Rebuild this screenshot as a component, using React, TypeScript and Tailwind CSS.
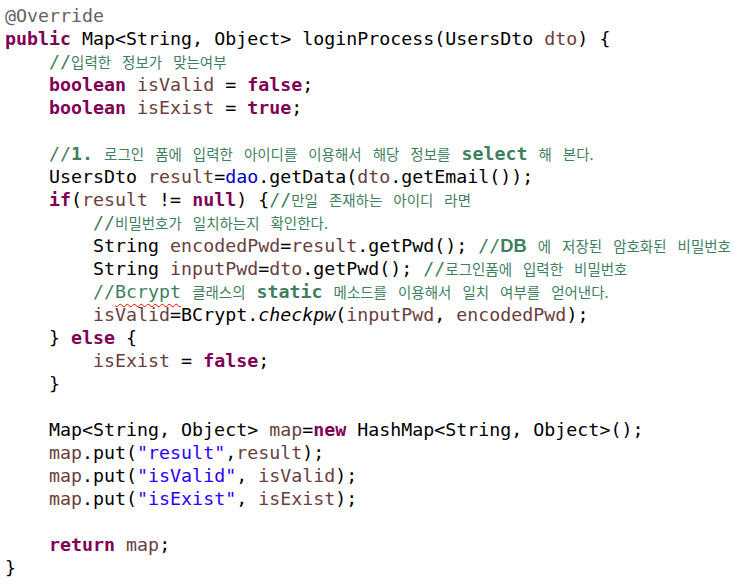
import React from "react";

// hangul falls back to a Korean face, spaces stay in the mono font
const HANGUL = /([\uAC00-\uD7A3]+\.?)/;

function Ko({ children }: { children: string }) {
  const parts = children.split(HANGUL);
  return (
    <>
      {parts.map((p, i) =>
        i % 2 === 1 ? (
          <span key={i} className="font-['Noto_Sans_CJK_KR',sans-serif] text-[14.5px]">
            {p}
          </span>
        ) : (
          <span key={i}>{p}</span>
        )
      )}
    </>
  );
}

const K = ({ children }: { children: React.ReactNode }) => (
  <span className="font-bold text-[#7f0055]">{children}</span>
);
const V = ({ children }: { children: React.ReactNode }) => (
  <span className="text-[#6a3e3e]">{children}</span>
);
const S = ({ children }: { children: React.ReactNode }) => (
  <span className="text-[#2a00ff]">{children}</span>
);
const F = ({ children }: { children: React.ReactNode }) => (
  <span className="text-[#0000c0]">{children}</span>
);
const C = ({ children }: { children: React.ReactNode }) => (
  <span className="text-[#3f7f5f]">{children}</span>
);
const B = ({ children }: { children: React.ReactNode }) => (
  <span className="font-bold">{children}</span>
);

function Line({ children }: { children?: React.ReactNode }) {
  return <div className="h-[23px] leading-[23px] whitespace-pre">{children}</div>;
}

export default function App() {
  return (
    <div className="w-[734px] h-[584px] overflow-hidden bg-white pl-[5px] pt-[4px] font-['DejaVu_Sans_Mono',monospace] text-[18.3px] text-black">
      <Line>
        <span className="text-[#646464]">@Override</span>
      </Line>
      <Line>
        <K>public</K> Map&lt;String, Object&gt; loginProcess(UsersDto <V>dto</V>) {"{"}
      </Line>
      <Line>
        {"    "}
        <C>
          <Ko>//입력한 정보가 맞는여부</Ko>
        </C>
      </Line>
      <Line>
        {"    "}
        <K>boolean</K> <V>isValid</V> = <K>false</K>;
      </Line>
      <Line>
        {"    "}
        <K>boolean</K> <V>isExist</V> = <K>true</K>;
      </Line>
      <Line />
      <Line>
        {"    "}
        <C>
          //<B>1.</B> <Ko>로그인 폼에 입력한 아이디를 이용해서 해당 정보를</Ko> <B>select</B>{" "}
          <Ko>해 본다.</Ko>
        </C>
      </Line>
      <Line>
        {"    "}UsersDto <V>result</V>=<F>dao</F>.getData(<V>dto</V>.getEmail());
      </Line>
      <Line>
        {"    "}
        <K>if</K>(<V>result</V> != <K>null</K>) {"{"}
        <C>
          <Ko>//만일 존재하는 아이디 라면</Ko>
        </C>
      </Line>
      <Line>
        {"        "}
        <C>
          <Ko>//비밀번호가 일치하는지 확인한다.</Ko>
        </C>
      </Line>
      <Line>
        {"        "}String <V>encodedPwd</V>=<V>result</V>.getPwd();{" "}
        <C>
          //<span className="font-bold font-['Liberation_Sans',sans-serif]">DB</span>{" "}
          <Ko>에 저장된 암호화된 비밀번호</Ko>
        </C>
      </Line>
      <Line>
        {"        "}String <V>inputPwd</V>=<V>dto</V>.getPwd();{" "}
        <C>
          <Ko>//로그인폼에 입력한 비밀번호</Ko>
        </C>
      </Line>
      <Line>
        {"        "}
        <C>
          //
          <span className="underline decoration-wavy decoration-[#ff0000] decoration-1 underline-offset-[5px]">
            Bcrypt
          </span>{" "}
          <Ko>클래스의</Ko> <B>static</B> <Ko>메소드를 이용해서 일치 여부를 얻어낸다.</Ko>
        </C>
      </Line>
      <Line>
        {"        "}
        <V>isValid</V>=BCrypt.<span className="italic">checkpw</span>(<V>inputPwd</V>, <V>encodedPwd</V>);
      </Line>
      <Line>
        {"    "}
        {"}"} <K>else</K> {"{"}
      </Line>
      <Line>
        {"        "}
        <V>isExist</V> = <K>false</K>;
      </Line>
      <Line>{"    }"}</Line>
      <Line />
      <Line>
        {"    "}Map&lt;String, Object&gt; <V>map</V>=<K>new</K> HashMap&lt;String, Object&gt;();
      </Line>
      <Line>
        {"    "}
        <V>map</V>.put(<S>"result"</S>,<V>result</V>);
      </Line>
      <Line>
        {"    "}
        <V>map</V>.put(<S>"isValid"</S>, <V>isValid</V>);
      </Line>
      <Line>
        {"    "}
        <V>map</V>.put(<S>"isExist"</S>, <V>isExist</V>);
      </Line>
      <Line />
      <Line>
        {"    "}
        <K>return</K> <V>map</V>;
      </Line>
      <Line>{"}"}</Line>
    </div>
  );
}
